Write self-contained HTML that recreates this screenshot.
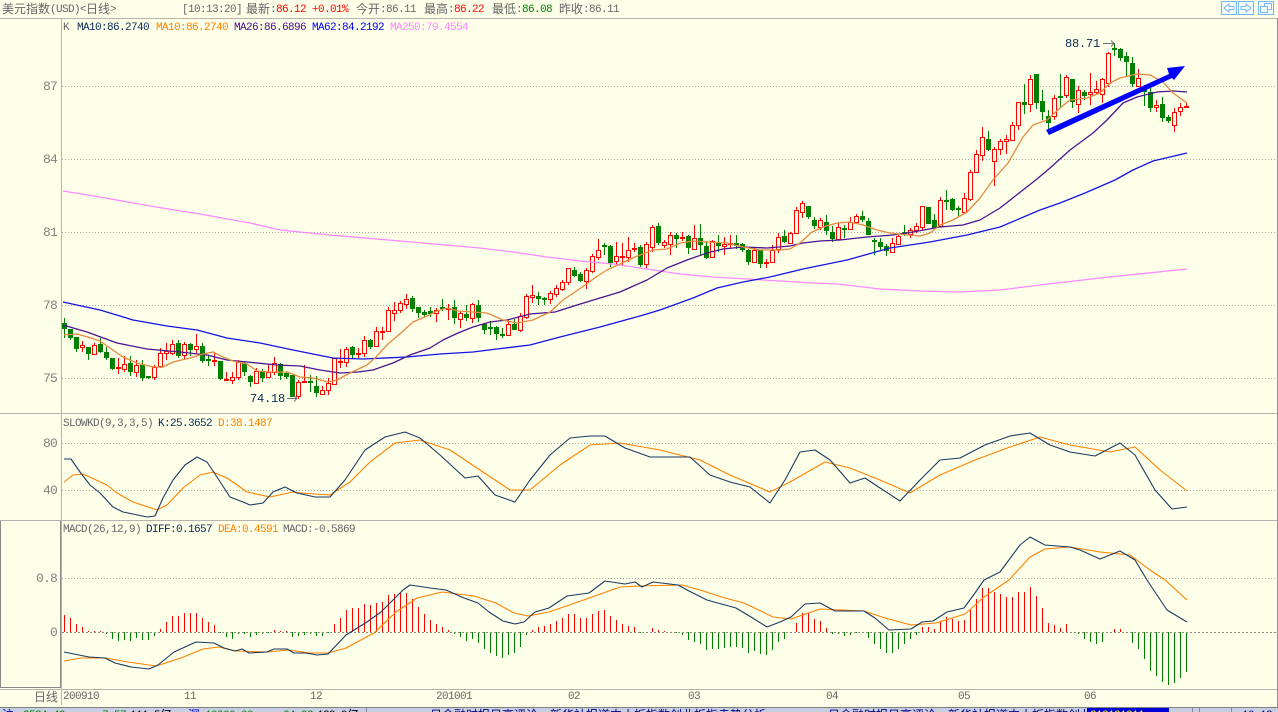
<!DOCTYPE html>
<html>
<head>
<meta charset="utf-8">
<title>美元指数</title>
<style>
html,body{margin:0;padding:0;background:#fdffe9}
#p{position:relative;width:1278px;height:712px;overflow:hidden;background:#fdffe9}
svg{position:absolute;left:0;top:0}
.t{position:absolute;margin-top:1px;font:11px/12px "Liberation Mono",monospace;letter-spacing:-.6px;white-space:pre;color:#666}
.c{position:absolute;margin-top:1px;font:12px/13px "Liberation Sans","WenQuanYi Zen Hei","Noto Sans CJK SC",sans-serif;white-space:pre;color:#666}
.y{position:absolute;margin-top:1px;font:13px/14px "Liberation Mono",monospace;letter-spacing:-.8px;color:#808080;text-align:right;white-space:pre}
.n{color:#0a2a55}.o{color:#ff8000}.u{color:#4b0a8c}.b{color:#0000ff}.k{color:#ff88ff}.r{color:#ff0000}.g{color:#008000}
.m{position:absolute;margin-top:1px;font:12px/13px "Liberation Mono",monospace;letter-spacing:-.2px;color:#0a2a55;white-space:pre}
</style>
</head>
<body>
<div id="p">
<svg width="1278" height="712" viewBox="0 0 1278 712">
<rect x="0" y="707" width="1278" height="5" fill="#c6cee2"/>
<g fill="none" shape-rendering="crispEdges">
<path d="M0 18.5H1278M0 413.5H1278M0 520.5H62M62 520.5H1278M0 689.5H1278" stroke="#b4b4ac"/>
<path d="M61.5 18V705" stroke="#b4b4ac"/>
<path d="M1277.5 18V707" stroke="#909090"/>
<path d="M0 707.5H1278" stroke="#808080"/>
<path d="M.5 521V687.5H60.5V521" stroke="#888"/>
<path d="M366.5 708V712" stroke="#808898"/>
<path d="M62 86.5H1277M62 159.5H1277M62 232.5H1277M62 305.5H1277M62 378.5H1277M62 443.5H1277M62 490.5H1277M62 578.5H1277" stroke="#aaaaa0" stroke-dasharray="1 2"/>
</g>
<!-- green wicks -->
<path shape-rendering="crispEdges" fill="none" stroke="#008000" d="M64.5 318V338M70.5 329V340M76.5 337V352M88.5 347V360M100.5 338V353M106.5 347V360M112.5 358V370M130.5 356V376M142.5 360V381M148.5 376V379M178.5 340V358M190.5 343V356M202.5 343V363M208.5 355V366M220.5 361V380M244.5 361V376M250.5 375V387M262.5 369V382M280.5 363V380M286.5 372V379M292.5 375V397M310.5 375V392M316.5 376V397M352.5 346V358M370.5 339V349M412.5 296V312M418.5 307V318M424.5 310V317M430.5 307V317M442.5 299V311M454.5 300V324M466.5 305V321M478.5 300V322M484.5 323V334M490.5 321V335M496.5 326V340M502.5 328V338M514.5 319V330M538.5 292V305M544.5 297V305M574.5 267V277M580.5 272V282M604.5 243V255M610.5 245V267M640.5 245V267M658.5 223V245M676.5 233V248M688.5 235V254M700.5 224V255M706.5 241V259M718.5 235V252M736.5 235V249M742.5 243V252M748.5 249V265M760.5 250V268M784.5 230V243M808.5 206V219M814.5 217V229M826.5 215V235M832.5 226V242M844.5 225V238M862.5 211V222M868.5 218V235M874.5 238V255M880.5 238V250M886.5 244V256M904.5 225V236M928.5 207V224M934.5 214V228M946.5 190V210M952.5 198V211M958.5 206V216M988.5 131V151M1024.5 84V114M1036.5 74V109M1042.5 90V120M1048.5 110V129M1060.5 74V108M1072.5 79V108M1084.5 90V100M1114.5 43V56M1120.5 48V61M1126.5 52V76M1132.5 57V87M1144.5 85V106M1150.5 88V112M1162.5 97V122M1168.5 115V123"/>
<!-- green bodies -->
<path shape-rendering="crispEdges" fill="#008000" d="M62 323h5v6h-5zM68 329h5v9h-5zM74 337h5v12h-5zM86 347h5v7h-5zM98 344h5v8h-5zM104 352h5v6h-5zM110 358h5v11h-5zM128 363h5v9h-5zM140 365h5v13h-5zM146 376h5v2h-5zM176 343h5v13h-5zM188 344h5v6h-5zM200 346h5v15h-5zM206 359h5v2h-5zM218 361h5v18h-5zM242 363h5v9h-5zM248 376h5v6h-5zM260 371h5v7h-5zM278 364h5v12h-5zM284 373h5v4h-5zM290 375h5v22h-5zM308 381h5v2h-5zM314 386h5v7h-5zM350 347h5v8h-5zM368 340h5v7h-5zM410 298h5v11h-5zM416 307h5v6h-5zM422 312h5v3h-5zM428 311h5v3h-5zM440 307h5v2h-5zM452 307h5v11h-5zM464 314h5v4h-5zM476 305h5v13h-5zM482 324h5v6h-5zM488 327h5v2h-5zM494 327h5v7h-5zM500 334h5v2h-5zM512 324h5v6h-5zM536 296h5v3h-5zM542 298h5v2h-5zM572 270h5v6h-5zM578 274h5v7h-5zM602 245h5v2h-5zM608 246h5v17h-5zM638 247h5v18h-5zM656 226h5v17h-5zM674 235h5v4h-5zM686 236h5v12h-5zM698 238h5v7h-5zM704 246h5v12h-5zM716 242h5v4h-5zM734 243h5v3h-5zM740 244h5v6h-5zM746 250h5v12h-5zM758 250h5v14h-5zM782 236h5v6h-5zM806 206h5v11h-5zM812 220h5v6h-5zM824 222h5v9h-5zM830 232h5v7h-5zM842 228h5v2h-5zM860 216h5v4h-5zM866 221h5v14h-5zM872 240h5v2h-5zM878 242h5v5h-5zM884 246h5v5h-5zM902 232h5v2h-5zM926 207h5v17h-5zM932 220h5v8h-5zM944 200h5v2h-5zM950 199h5v11h-5zM956 208h5v2h-5zM986 139h5v11h-5zM1022 102h5v3h-5zM1034 74h5v29h-5zM1040 101h5v11h-5zM1046 116h5v7h-5zM1058 96h5v2h-5zM1070 79h5v23h-5zM1082 92h5v4h-5zM1112 48h5v2h-5zM1118 49h5v9h-5zM1124 56h5v6h-5zM1130 63h5v21h-5zM1142 89h5v3h-5zM1148 92h5v16h-5zM1160 104h5v14h-5zM1166 117h5v4h-5z"/>
<!-- red wicks -->
<path shape-rendering="crispEdges" fill="none" stroke="#ff0000" d="M82.5 341V352M94.5 343V355M118.5 358V374M124.5 356V372M136.5 360V377M154.5 365V380M160.5 348V368M166.5 343V360M172.5 340V355M184.5 342V359M196.5 334V353M214.5 352V366M226.5 372V380M232.5 372V384M238.5 360V380M256.5 368V383M268.5 365V377M274.5 357V375M298.5 380V399M304.5 365V383M322.5 386V395M328.5 378V395M334.5 358V385M340.5 349V368M346.5 347V367M358.5 348V358M364.5 336V357M376.5 327V347M382.5 327V340M388.5 307V331M394.5 302V321M400.5 301V313M406.5 294V309M436.5 308V322M448.5 304V320M460.5 311V328M472.5 303V323M508.5 320V335M520.5 313V332M526.5 294V319M532.5 285V303M550.5 291V304M556.5 285V297M562.5 280V291M568.5 268V285M586.5 268V289M592.5 254V273M598.5 239V260M616.5 242V265M622.5 243V266M628.5 237V262M634.5 243V252M646.5 242V268M652.5 225V252M664.5 240V248M670.5 232V255M682.5 232V241M694.5 225V250M712.5 240V258M724.5 237V255M730.5 235V248M754.5 248V262M766.5 259V268M772.5 245V262M778.5 233V253M790.5 232V243M796.5 207V233M802.5 201V218M820.5 218V230M838.5 223V240M850.5 217V229M856.5 214V223M892.5 238V253M898.5 235V245M910.5 228V238M916.5 223V233M922.5 206V230M940.5 197V227M964.5 193V212M970.5 170V201M976.5 150V172M982.5 127V161M994.5 147V186M1000.5 139V155M1006.5 135V154M1012.5 122V140M1018.5 102V130M1030.5 75V112M1054.5 95V120M1066.5 75V98M1078.5 86V113M1090.5 73V105M1096.5 81V95M1102.5 78V103M1108.5 52V87M1138.5 69V87M1156.5 100V112M1174.5 108V132M1180.5 103V116M1186.5 103V108"/>
<!-- red bodies -->
<path shape-rendering="crispEdges" transform="translate(0 .5)" fill="#fdffe9" stroke="#ff0000" d="M80.5 345h4v2h-4zM92.5 345h4v9h-4zM116.5 367h4v1h-4zM122.5 364h4v5h-4zM134.5 365h4v7h-4zM152.5 367h4v10h-4zM158.5 353h4v13h-4zM164.5 351h4v2h-4zM170.5 344h4v9h-4zM182.5 344h4v11h-4zM194.5 346h4v3h-4zM212.5 360h4v1h-4zM224.5 379h4v1h-4zM230.5 377h4v3h-4zM236.5 362h4v15h-4zM254.5 371h4v12h-4zM266.5 372h4v5h-4zM272.5 363h4v9h-4zM296.5 382h4v14h-4zM302.5 381h4v1h-4zM320.5 390h4v4h-4zM326.5 383h4v7h-4zM332.5 358h4v26h-4zM338.5 361h4v1h-4zM344.5 349h4v13h-4zM356.5 353h4v1h-4zM362.5 340h4v13h-4zM374.5 331h4v15h-4zM380.5 331h4v1h-4zM386.5 310h4v21h-4zM392.5 310h4v3h-4zM398.5 303h4v7h-4zM404.5 299h4v5h-4zM434.5 310h4v3h-4zM446.5 308h4v1h-4zM458.5 313h4v6h-4zM470.5 304h4v14h-4zM506.5 324h4v11h-4zM518.5 316h4v14h-4zM524.5 296h4v21h-4zM530.5 295h4v2h-4zM548.5 293h4v6h-4zM554.5 288h4v6h-4zM560.5 282h4v7h-4zM566.5 268h4v14h-4zM584.5 270h4v11h-4zM590.5 256h4v15h-4zM596.5 250h4v7h-4zM614.5 256h4v5h-4zM620.5 256h4v1h-4zM626.5 250h4v7h-4zM632.5 248h4v1h-4zM644.5 244h4v20h-4zM650.5 227h4v20h-4zM662.5 242h4v3h-4zM668.5 235h4v9h-4zM680.5 237h4v1h-4zM692.5 238h4v11h-4zM710.5 241h4v16h-4zM722.5 244h4v2h-4zM728.5 243h4v1h-4zM752.5 250h4v12h-4zM764.5 262h4v1h-4zM770.5 250h4v12h-4zM776.5 237h4v12h-4zM788.5 233h4v10h-4zM794.5 210h4v23h-4zM800.5 203h4v9h-4zM818.5 220h4v7h-4zM836.5 227h4v12h-4zM848.5 222h4v7h-4zM854.5 216h4v6h-4zM890.5 243h4v9h-4zM896.5 236h4v8h-4zM908.5 230h4v4h-4zM914.5 226h4v4h-4zM920.5 206h4v21h-4zM938.5 200h4v26h-4zM962.5 198h4v14h-4zM968.5 172h4v27h-4zM974.5 154h4v18h-4zM980.5 137h4v18h-4zM992.5 149h4v12h-4zM998.5 141h4v8h-4zM1004.5 139h4v2h-4zM1010.5 125h4v15h-4zM1016.5 102h4v23h-4zM1028.5 79h4v25h-4zM1052.5 98h4v18h-4zM1064.5 77h4v18h-4zM1076.5 90h4v14h-4zM1088.5 92h4v2h-4zM1094.5 89h4v3h-4zM1100.5 79h4v15h-4zM1106.5 53h4v30h-4zM1136.5 78h4v8h-4zM1154.5 105h4v2h-4zM1172.5 112h4v13h-4zM1178.5 107h4v4h-4zM1184.5 106h4v1h-4z"/>
<!-- MA lines -->
<g fill="none" stroke-width="1.3" stroke-linejoin="round">
<polyline stroke="#ff88ff" points="63,191 100,197 150,206 200,214 250,223 280,230 330,235 400,241 480,248 513,252 547,257 580,261 613,264 647,269 680,274 713,277 747,279 780,281 813,283 838,284 880,289 920,291 960,292 1000,290 1040,285 1100,278 1187,269"/>
<polyline stroke="#1414e6" points="63,302 100,310 133,320 167,326 197,330 227,338 260,343 293,350 333,358 363,359 407,357 440,354 473,352 497,349 530,345 560,337 600,327 640,316 660,310 693,298 717,288 743,282 770,277 803,269 847,260 890,248 930,242 967,235 1000,227 1040,210 1060,203 1085,193 1115,180 1133,170 1153,161 1187,153"/>
<polyline stroke="#4b1490" points="63,325 87,332 117,343 147,349 180,352 207,355 227,360 247,362 277,365 300,366 320,370 340,373 358,372 373,370 393,363 410,355 430,348 443,340 458,333 473,327 490,322 507,320 530,314 555,312 577,305 600,298 620,292 647,280 667,268 687,260 707,253 723,249 743,247 767,248 790,246 803,243 820,241 840,240 867,237 893,235 913,232 940,227 963,225 980,220 1000,208 1037,179 1050,168 1070,150 1093,133 1107,120 1123,103 1137,97 1157,92 1173,91 1187,92"/>
<polyline stroke="#e48a40" points="64,335 77,334 88,337 100,341 110,348 123,357 137,363 153,367 163,367 173,362 190,358 203,354 213,352 223,357 233,361 247,364 257,371 270,372 287,372 300,377 313,378 328,382 337,380 350,373 367,365 375,358 388,344 402,332 413,322 427,316 437,311 447,308 458,311 473,312 487,313 503,320 517,323 533,320 550,312 563,300 575,292 588,283 596,277 607,270 620,264 635,257 653,250 667,249 680,243 693,241 707,242 727,243 743,247 760,250 780,250 790,249 800,243 812,232 823,227 837,223 850,222 863,225 877,230 890,233 907,235 920,236 930,233 940,225 953,220 967,212 980,198 993,180 1008,163 1023,137 1033,125 1047,120 1060,108 1070,100 1087,98 1100,93 1110,83 1120,78 1137,74 1150,75 1163,82 1173,93 1187,103"/>
</g>
<!-- big arrow -->
<polygon fill="#0000ff" points="1046,130 1169,74 1167,68 1185,66 1174,80 1172,78 1049,135"/>
<path d="M1103 43.5h11m-3-3l3 3-3 3M287 398.5h10m-3-3l3 3-3 3" fill="none" stroke="#707070"/>
<!-- KD -->
<g fill="none" stroke-width="1.1" stroke-linejoin="round">
<polyline stroke="#ff8000" points="64,482 73,475 83,474 107,485 117,493 133,502 157,510 167,505 183,488 200,475 213,472 227,478 247,492 270,497 293,492 300,493 330,495 350,482 370,462 395,443 420,440 450,450 480,470 510,490 530,490 560,465 590,445 620,443 660,450 700,460 730,475 770,492 790,482 825,462 850,468 880,480 910,493 940,475 975,460 1010,447 1040,437 1070,445 1110,452 1135,447 1160,470 1187,491"/>
<polyline stroke="#1a3a62" points="64,459 71,459 80,472 90,485 100,493 113,507 123,512 133,514 147,517 155,516 163,498 173,480 185,465 197,457 207,462 217,477 230,497 243,502 250,505 263,503 273,492 285,487 297,493 315,497 330,497 345,480 365,450 385,437 405,432 420,438 440,455 465,478 478,476 495,495 515,502 530,480 550,455 570,438 590,436 605,436 625,448 650,457 690,457 710,475 730,482 750,487 770,503 785,480 800,452 815,450 830,460 850,483 865,478 880,488 900,501 920,480 940,460 960,458 985,445 1010,436 1030,433 1050,445 1070,452 1095,456 1120,443 1135,455 1155,490 1172,509 1187,507"/>
</g>
<!-- MACD histogram -->
<path shape-rendering="crispEdges" fill="none" stroke="#ff0000" d="M64.5 632v-17M70.5 632v-14M76.5 632v-8M82.5 632v-5M88.5 632v-1M94.5 632v-1M100.5 632v-1M160.5 632v-3M166.5 632v-10M172.5 632v-16M178.5 632v-16M184.5 632v-19M190.5 632v-19M196.5 632v-19M202.5 632v-14M208.5 632v-10M214.5 632v-7M274.5 632v-2M280.5 632v-1M286.5 632v-1M334.5 632v-8M340.5 632v-14M346.5 632v-22M352.5 632v-24M358.5 632v-24M364.5 632v-28M370.5 632v-27M376.5 632v-29M382.5 632v-30M388.5 632v-37M394.5 632v-38M400.5 632v-39M406.5 632v-39M412.5 632v-33M418.5 632v-25M424.5 632v-18M430.5 632v-12M436.5 632v-8M442.5 632v-5M448.5 632v-2M532.5 632v-2M538.5 632v-5M544.5 632v-6M550.5 632v-8M556.5 632v-11M562.5 632v-14M568.5 632v-18M574.5 632v-18M580.5 632v-14M586.5 632v-14M592.5 632v-18M598.5 632v-21M604.5 632v-22M610.5 632v-16M616.5 632v-12M622.5 632v-8M628.5 632v-6M634.5 632v-5M652.5 632v-4M658.5 632v-2M664.5 632v-1M796.5 632v-9M802.5 632v-19M808.5 632v-19M814.5 632v-13M820.5 632v-11M826.5 632v-4M922.5 632v-5M928.5 632v-5M934.5 632v-3M940.5 632v-11M946.5 632v-15M952.5 632v-13M958.5 632v-11M964.5 632v-12M970.5 632v-22M976.5 632v-33M982.5 632v-44M988.5 632v-44M994.5 632v-40M1000.5 632v-38M1006.5 632v-35M1012.5 632v-35M1018.5 632v-40M1024.5 632v-40M1030.5 632v-45M1036.5 632v-36M1042.5 632v-24M1048.5 632v-9M1054.5 632v-7M1060.5 632v-4M1066.5 632v-8M1114.5 632v-3M1120.5 632v-3"/>
<path shape-rendering="crispEdges" fill="none" stroke="#008000" d="M106.5 632v2M112.5 632v7M118.5 632v9M124.5 632v8M130.5 632v9M136.5 632v6M142.5 632v8M148.5 632v8M154.5 632v4M220.5 632v1M226.5 632v5M232.5 632v7M238.5 632v2M244.5 632v2M250.5 632v5M256.5 632v3M262.5 632v2M268.5 632v1M292.5 632v5M298.5 632v4M304.5 632v3M310.5 632v2M316.5 632v4M322.5 632v4M328.5 632v1M454.5 632v2M460.5 632v5M466.5 632v9M472.5 632v7M478.5 632v11M484.5 632v17M490.5 632v21M496.5 632v24M502.5 632v26M508.5 632v23M514.5 632v21M520.5 632v15M526.5 632v3M640.5 632v1M676.5 632v1M682.5 632v3M688.5 632v8M694.5 632v10M700.5 632v12M706.5 632v18M712.5 632v17M718.5 632v17M724.5 632v16M730.5 632v15M736.5 632v15M742.5 632v16M748.5 632v21M754.5 632v19M760.5 632v22M766.5 632v23M772.5 632v18M778.5 632v10M784.5 632v7M832.5 632v2M838.5 632v2M844.5 632v4M850.5 632v3M856.5 632v1M868.5 632v6M874.5 632v12M880.5 632v17M886.5 632v21M892.5 632v21M898.5 632v17M904.5 632v12M910.5 632v7M916.5 632v3M1078.5 632v2M1084.5 632v7M1090.5 632v10M1096.5 632v12M1102.5 632v10M1132.5 632v11M1138.5 632v17M1144.5 632v27M1150.5 632v39M1156.5 632v44M1162.5 632v50M1168.5 632v53M1174.5 632v51M1180.5 632v46M1186.5 632v40"/>
<path shape-rendering="crispEdges" d="M62 632.5H1277" stroke="#8a8a80" stroke-dasharray="2 2" fill="none"/>
<!-- MACD lines -->
<g fill="none" stroke-width="1.1" stroke-linejoin="round">
<polyline stroke="#ff8000" points="64,661 81,658 106,658 128,662 156,666 181,658 203,649 219,647 235,651 267,652 289,650 310,653 328,653 346,648 374,633 396,612 417,598 442,592 474,596 496,603 514,613 528,616 549,612 578,602 620,587 638,586 682,585 700,590 725,598 744,603 773,617 791,619 820,609 864,611 885,618 911,625 936,623 965,614 984,597 1009,580 1030,557 1045,549 1070,547 1100,552 1130,555 1150,570 1165,580 1176,590 1187,600"/>
<polyline stroke="#1a3a62" points="64,652 74,654 89,657 105,658 115,663 131,667 149,669 158,665 174,652 196,642 214,643 224,648 235,651 242,649 249,653 267,652 274,649 287,649 294,653 306,653 317,655 328,654 346,635 367,622 381,612 403,590 410,585 430,588 446,590 464,598 478,603 489,612 503,621 515,624 524,622 535,612 549,608 567,596 589,593 605,581 625,584 635,582 642,587 653,582 678,585 689,591 707,600 736,608 751,617 767,627 780,622 791,617 805,604 820,603 835,611 864,611 875,618 889,630 911,629 922,622 933,621 947,612 964,608 975,593 984,580 1000,572 1020,545 1030,537 1045,545 1070,547 1080,550 1100,559 1120,551 1135,560 1147,580 1167,610 1187,622"/>
</g>
<!-- top buttons -->
<g shape-rendering="crispEdges" fill="#f4fbff" stroke="#78b8f0">
<rect x="1221.5" y="1.5" width="15" height="13"/>
<rect x="1238.5" y="1.5" width="15" height="13"/>
<rect x="1258.5" y="1.5" width="15" height="13"/>
</g>
<g fill="none" stroke="#78b8f0">
<path d="M1224 8l5-4v2.5h5v3h-5V12z"/>
<path d="M1251 8l-5-4v2.5h-5v3h5V12z"/>
<path shape-rendering="crispEdges" d="M1264.5 6.5V3.5h7v6h-3M1260.5 6.5h7v6h-7z"/>
</g>
<path shape-rendering="crispEdges" d="M1087 708h82v4h-82z" fill="#0000d8"/>
<path shape-rendering="crispEdges" d="M1192 708h1v4h-1zM1199 708h1v4h-1zM1231 708h1v4h-1z" fill="#808898"/>
</svg>

<span class="c" style="left:2px;top:2px">美元指数</span><span class="t" style="left:50px;top:3px">(USD)</span><span class="c" style="left:86px;top:2px">日线</span><span class="t" style="left:80px;top:3px">&lt;</span><span class="t" style="left:110px;top:3px">&gt;</span>
<span class="t" style="left:182px;top:3px">[10:13:20]</span>
<span class="c" style="left:246px;top:2px">最新</span><span class="t" style="left:270px;top:3px">:</span><span class="t r" style="left:276px;top:3px">86.12</span><span class="t r" style="left:312px;top:3px">+0.01%</span>
<span class="c" style="left:356px;top:2px">今开</span><span class="t" style="left:380px;top:3px">:86.11</span>
<span class="c" style="left:424px;top:2px">最高</span><span class="t" style="left:448px;top:3px">:</span><span class="t r" style="left:454px;top:3px">86.22</span>
<span class="c" style="left:492px;top:2px">最低</span><span class="t" style="left:516px;top:3px">:</span><span class="t g" style="left:522px;top:3px">86.08</span>
<span class="c" style="left:559px;top:2px">昨收</span><span class="t" style="left:583px;top:3px">:86.11</span>

<span class="t" style="left:63px;top:21px">K</span>
<span class="t n" style="left:77px;top:21px">MA10:86.2740</span>
<span class="t o" style="left:156px;top:21px">MA10:86.2740</span>
<span class="t u" style="left:234px;top:21px">MA26:86.6896</span>
<span class="t b" style="left:312px;top:21px">MA62:84.2192</span>
<span class="t k" style="left:390px;top:21px">MA250:79.4554</span>

<span class="t" style="left:63px;top:417px">SLOWKD(9,3,3,5)</span>
<span class="t n" style="left:158px;top:417px">K:25.3652</span>
<span class="t o" style="left:218px;top:417px">D:38.1487</span>
<span class="t" style="left:63px;top:523px">MACD(26,12,9)</span>
<span class="t n" style="left:146px;top:523px">DIFF:0.1657</span>
<span class="t o" style="left:218px;top:523px">DEA:0.4591</span>
<span class="t" style="left:283px;top:523px">MACD:-0.5869</span>

<span class="y" style="left:20px;width:37px;top:79px">87</span>
<span class="y" style="left:20px;width:37px;top:152px">84</span>
<span class="y" style="left:20px;width:37px;top:225px">81</span>
<span class="y" style="left:20px;width:37px;top:298px">78</span>
<span class="y" style="left:20px;width:37px;top:371px">75</span>
<span class="y" style="left:20px;width:37px;top:436px">80</span>
<span class="y" style="left:20px;width:37px;top:483px">40</span>
<span class="y" style="left:20px;width:37px;top:571px">0.8</span>
<span class="y" style="left:20px;width:37px;top:625px">0</span>

<span class="m" style="left:1065px;top:37px">88.71</span>
<span class="m" style="left:250px;top:392px">74.18</span>

<span class="c" style="left:34px;top:690px">日线</span>
<span class="t" style="left:63px;top:690px">200910</span>
<span class="t" style="left:184px;top:690px">11</span>
<span class="t" style="left:310px;top:690px">12</span>
<span class="t" style="left:436px;top:690px">201001</span>
<span class="t" style="left:568px;top:690px">02</span>
<span class="t" style="left:688px;top:690px">03</span>
<span class="t" style="left:826px;top:690px">04</span>
<span class="t" style="left:958px;top:690px">05</span>
<span class="t" style="left:1084px;top:690px">06</span>

<span class="c" style="left:2px;top:708px;color:#0000c0">沪</span>
<span class="t g" style="left:23px;top:709px">2584.49</span>
<span class="t g" style="left:96px;top:709px">-7.57</span>
<span class="t" style="left:130px;top:709px;color:#000">111.5</span><span class="c" style="left:160px;top:708px;color:#000">亿</span>
<span class="c" style="left:188px;top:708px;color:#0000c0">深</span>
<span class="t g" style="left:205px;top:709px">10000.00</span>
<span class="t g" style="left:277px;top:709px">-64.93</span>
<span class="t" style="left:317px;top:709px;color:#000">129.9</span><span class="c" style="left:347px;top:708px;color:#000">亿</span>
<span class="c" style="left:430px;top:708px;color:#000080">日金融时报日高评论，新华社报道中小板指数创业板指走势分析</span>
<span class="c" style="left:828px;top:708px;color:#000080">日金融时报日高评论，新华社报道中小板指数创业</span>
<span class="t" style="left:1090px;top:709px;color:#ffff00">312121211</span>
<span class="t" style="left:1242px;top:709px;color:#000080">10:13</span>
</div>
</body>
</html>
